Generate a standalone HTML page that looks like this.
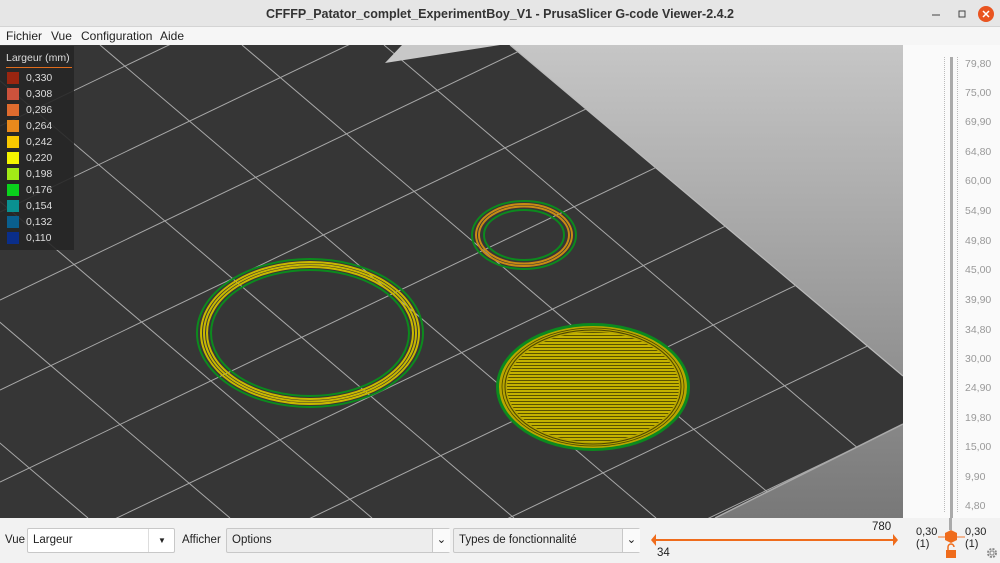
<!DOCTYPE html>
<html><head><meta charset="utf-8"><style>
*{margin:0;padding:0;box-sizing:border-box}
html,body{width:1000px;height:563px;overflow:hidden}
body{background:#f2f2f2;font-family:"Liberation Sans","DejaVu Sans",sans-serif;position:relative}
.title{position:absolute;left:0;top:0;width:1000px;height:27px;background:#e6e6e6;border-bottom:1px solid #d4d4d4;text-align:center;font-weight:bold;font-size:12.5px;line-height:28px;color:#333}
.menu{position:absolute;left:0;top:27px;width:1000px;height:18px;background:#f6f6f6;font-size:12px;line-height:18px;color:#222}
.menu span{position:absolute;top:0}
.legend{position:absolute;left:0;top:46px;width:74px;height:204px;background:rgba(38,38,38,0.9);color:#ddd;font-size:10.5px}
.legend .h{position:absolute;left:6px;top:6px;width:66px;border-bottom:1px solid #e06c1c;padding-bottom:3px}
.legend .it{position:absolute;left:7px;width:70px;height:14px}
.legend .it i{position:absolute;left:0;top:1px;width:12px;height:12px}
.legend .it b{position:absolute;left:19px;top:0;font-weight:normal;line-height:14px}
.right{position:absolute;left:903px;top:45px;width:97px;height:473px;background:#fafafa;overflow:hidden}
.bot{position:absolute;left:0;top:518px;width:1000px;height:45px;background:#f2f2f2;font-size:11.5px;color:#222;overflow:hidden}
.box{position:absolute;border:1px solid #c8c8c8;border-radius:2px;height:25px;top:10px;line-height:23px;padding-left:5px}
.lab{position:absolute;font-size:10.5px;color:#999}
</style></head><body>
<div class="title">CFFFP_Patator_complet_ExperimentBoy_V1 - PrusaSlicer G-code Viewer-2.4.2</div>
<svg style="position:absolute;left:0;top:0" width="1000" height="27">
<line x1="932" y1="15" x2="940" y2="15" stroke="#444" stroke-width="1"/>
<rect x="959" y="11" width="6" height="6" fill="none" stroke="#444"/>
<circle cx="986" cy="14" r="8" fill="#e95420"/>
<path d="M983 11 L989 17 M989 11 L983 17" stroke="#fff" stroke-width="1.5"/>
</svg>
<div class="menu"><span style="left:6px">Fichier</span><span style="left:51px">Vue</span><span style="left:81px">Configuration</span><span style="left:160px">Aide</span></div>

<svg style="position:absolute;left:0;top:45px" width="903" height="473" viewBox="0 45 903 473">
<defs>
<linearGradient id="g" x1="0" y1="0" x2="0" y2="1"><stop offset="0" stop-color="#c6c6c6"/><stop offset="1" stop-color="#787878"/></linearGradient>
<clipPath id="bed"><polygon points="0,45 510,45 903,376 903,424 715,518 0,518"/></clipPath>
<pattern id="hat" width="6" height="3" patternUnits="userSpaceOnUse"><rect width="6" height="3" fill="#c4b200"/><rect y="2" width="6" height="1" fill="#5a5200"/></pattern>
</defs>
<rect x="0" y="45" width="903" height="473" fill="url(#g)"/>
<polygon points="0,45 510,45 903,376 903,424 715,518 0,518" fill="#363636"/>
<polyline points="510,45 903,376" stroke="#bbb" stroke-width="1.2" fill="none"/>
<polyline points="903,424 715,518" stroke="#aaa" stroke-width="1.5" fill="none"/>
<g clip-path="url(#bed)" stroke="#a8a8a8" stroke-width="1">
<line x1="-468" y1="45" x2="88" y2="518"/><line x1="-326" y1="45" x2="230" y2="518"/><line x1="-184" y1="45" x2="372" y2="518"/><line x1="-42" y1="45" x2="514" y2="518"/><line x1="100" y1="45" x2="656" y2="518"/><line x1="242" y1="45" x2="798" y2="518"/><line x1="384" y1="45" x2="940" y2="518"/>
<line x1="0" y1="42" x2="903" y2="-391"/><line x1="0" y1="126" x2="903" y2="-307"/><line x1="0" y1="212" x2="903" y2="-221"/><line x1="0" y1="300" x2="903" y2="-133"/><line x1="0" y1="390" x2="903" y2="-43"/><line x1="0" y1="482" x2="903" y2="49"/><line x1="0" y1="574" x2="903" y2="141"/><line x1="0" y1="667" x2="903" y2="234"/><line x1="0" y1="762" x2="903" y2="329"/><line x1="0" y1="858" x2="903" y2="425"/><line x1="0" y1="956" x2="903" y2="523"/>
</g>
<polygon points="385,63 402,45 500,45" fill="#c8c8c8"/>
<g fill="none" stroke-width="2">
<ellipse cx="310" cy="333" rx="113" ry="74" stroke="#0c8a1e"/>
<ellipse cx="310" cy="333" rx="109" ry="71" stroke="#c9b800"/>
<ellipse cx="310" cy="333" rx="106" ry="68.5" stroke="#c9b800"/>
<ellipse cx="310" cy="333" rx="103" ry="66" stroke="#c9b800"/>
<ellipse cx="310" cy="333" rx="99" ry="63" stroke="#0c8a1e"/>
<ellipse cx="524" cy="235" rx="52" ry="34" stroke="#0c8a1e"/>
<ellipse cx="524" cy="235" rx="48" ry="31" stroke="#c88a14"/>
<ellipse cx="524" cy="235" rx="45" ry="28.5" stroke="#c88a14"/>
<ellipse cx="524" cy="235" rx="40" ry="25" stroke="#0c8a1e"/>
</g>
<ellipse cx="593" cy="387" rx="97" ry="64" fill="#0c8a1e"/>
<ellipse cx="593" cy="387" rx="94" ry="61" fill="#b8a600"/>
<ellipse cx="593" cy="387" rx="91" ry="59" fill="none" stroke="#4a4400" stroke-width="0.8"/>
<ellipse cx="593" cy="387" rx="88" ry="57" fill="none" stroke="#4a4400" stroke-width="1"/>
<ellipse cx="593" cy="387" rx="86" ry="55" fill="url(#hat)"/>
</svg>

<div class="legend">
<div class="h">Largeur (mm)</div>
<div class="it" style="top:25px"><i style="background:#9a2510"></i><b>0,330</b></div>
<div class="it" style="top:41px"><i style="background:#cc523c"></i><b>0,308</b></div>
<div class="it" style="top:57px"><i style="background:#de6b2e"></i><b>0,286</b></div>
<div class="it" style="top:73px"><i style="background:#e8891c"></i><b>0,264</b></div>
<div class="it" style="top:89px"><i style="background:#f9c800"></i><b>0,242</b></div>
<div class="it" style="top:105px"><i style="background:#f5f500"></i><b>0,220</b></div>
<div class="it" style="top:121px"><i style="background:#a2ea16"></i><b>0,198</b></div>
<div class="it" style="top:137px"><i style="background:#0ad21c"></i><b>0,176</b></div>
<div class="it" style="top:153px"><i style="background:#0a9090"></i><b>0,154</b></div>
<div class="it" style="top:169px"><i style="background:#0a5f8e"></i><b>0,132</b></div>
<div class="it" style="top:185px"><i style="background:#0a2e8a"></i><b>0,110</b></div>
</div>

<div class="right">
<div style="position:absolute;left:47px;top:12px;width:3px;height:461px;background:#aaa"></div>
<div style="position:absolute;left:41px;top:12px;width:1px;height:455px;border-left:1px dotted #bbb"></div>
<div style="position:absolute;left:54px;top:12px;width:1px;height:455px;border-left:1px dotted #bbb"></div>
<div class="lab" style="left:62px;top:13px">79,80</div>
<div class="lab" style="left:62px;top:42px">75,00</div>
<div class="lab" style="left:62px;top:71px">69,90</div>
<div class="lab" style="left:62px;top:101px">64,80</div>
<div class="lab" style="left:62px;top:130px">60,00</div>
<div class="lab" style="left:62px;top:160px">54,90</div>
<div class="lab" style="left:62px;top:190px">49,80</div>
<div class="lab" style="left:62px;top:219px">45,00</div>
<div class="lab" style="left:62px;top:249px">39,90</div>
<div class="lab" style="left:62px;top:279px">34,80</div>
<div class="lab" style="left:62px;top:308px">30,00</div>
<div class="lab" style="left:62px;top:337px">24,90</div>
<div class="lab" style="left:62px;top:367px">19,80</div>
<div class="lab" style="left:62px;top:396px">15,00</div>
<div class="lab" style="left:62px;top:426px">9,90</div>
<div class="lab" style="left:62px;top:455px">4,80</div>
</div>

<div class="bot">
<span style="position:absolute;left:5px;top:16px">Vue</span>
<div class="box" style="left:27px;width:148px;background:#fff">Largeur<span style="position:absolute;left:120px;top:0;width:27px;height:23px;border-left:1px solid #ddd;text-align:center;font-size:8px">▼</span></div>
<span style="position:absolute;left:182px;top:16px">Afficher</span>
<div class="box" style="left:226px;width:224px;background:#ededed">Options<span style="position:absolute;left:205px;top:0;width:18px;height:23px;border-left:1px solid #c8c8c8;background:#fafafa;text-align:center">⌄</span></div>
<div class="box" style="left:453px;width:187px;background:#ededed">Types de fonctionnalité<span style="position:absolute;left:168px;top:0;width:18px;height:23px;border-left:1px solid #c8c8c8;background:#fafafa;text-align:center">⌄</span></div>
<svg style="position:absolute;left:0;top:0" width="1000" height="45">
<rect x="949" y="0" width="3" height="12" fill="#aaa"/>
<line x1="655" y1="22" x2="895" y2="22" stroke="#ef6c1c" stroke-width="2"/>
<polygon points="651,22 656,16 656,28" fill="#ef6c1c"/>
<polygon points="898,22 893,16 893,28" fill="#ef6c1c"/>
<line x1="938" y1="19" x2="965" y2="19" stroke="#f2a070" stroke-width="1.5"/>
<polygon points="951,12 957,15 957,22 951,25 945,22 945,15" fill="#ef6c1c"/>
<rect x="946" y="32" width="10" height="8" fill="#ef6c1c"/>
<path d="M948 32 v-3 a3 3 0 0 1 6 0" fill="none" stroke="#ef6c1c" stroke-width="1.5"/>
<circle cx="992" cy="35" r="4" fill="none" stroke="#888" stroke-width="2" stroke-dasharray="2 1.2"/>
<circle cx="992" cy="35" r="2" fill="none" stroke="#888" stroke-width="1"/>
</svg>
<span style="position:absolute;left:872px;top:3px">780</span>
<span style="position:absolute;left:657px;top:29px">34</span>
<span style="position:absolute;left:916px;top:8px;font-size:11px;line-height:12px">0,30<br>(1)</span>
<span style="position:absolute;left:965px;top:8px;font-size:11px;line-height:12px">0,30<br>(1)</span>
</div>
</body></html>
